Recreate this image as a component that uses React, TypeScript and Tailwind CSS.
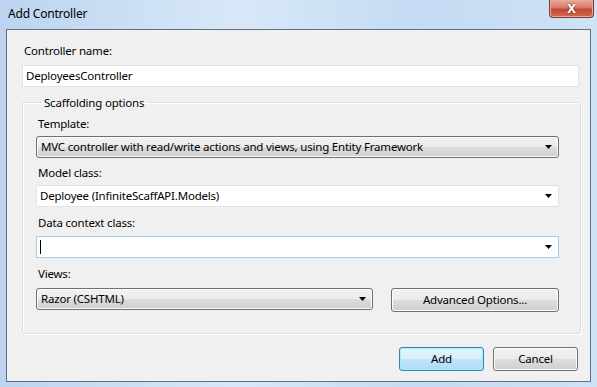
const font = { fontFamily: '"Noto Sans", "Open Sans", sans-serif' };

function Arrow() {
  return (
    <svg width="7" height="4" viewBox="0 0 7 4" className="shrink-0">
      <path d="M0 0h7L3.5 4z" fill="#000" />
    </svg>
  );
}

function Label({ children }: { children: React.ReactNode }) {
  return <div className="h-[17px] text-[11.5px] leading-[17px] tracking-[-0.2px] text-black">{children}</div>;
}

function DropButton({ text, className }: { text: string; className: string }) {
  return (
    <div
      className={`flex h-[22px] items-center justify-between rounded-[3px] border border-[#707070] bg-[linear-gradient(#f2f2f2,#ebebeb_50%,#dddddd_50%,#cfcfcf)] pl-[4px] pr-[6px] text-[11.5px] tracking-[-0.2px] text-black shadow-[inset_0_0_0_1px_#fcfcfc] ${className}`}
    >
      <span>{text}</span>
      <Arrow />
    </div>
  );
}

function Combo({ text, focused }: { text?: string; focused?: boolean }) {
  return (
    <div
      className={`flex h-[22px] w-[523px] items-center justify-between border bg-white pl-[3px] pr-[6px] text-[11.5px] tracking-[-0.2px] text-black ${
        focused ? 'border-[#a9cde6]' : 'border-[#e2e3ea]'
      }`}
    >
      {text ? <span>{text}</span> : <span className="h-[14px] w-px bg-black" />}
      <Arrow />
    </div>
  );
}

function Button({ text, primary, className }: { text: string; primary?: boolean; className: string }) {
  return (
    <div
      className={`flex items-center justify-center rounded-[3px] border text-[11.5px] tracking-[-0.2px] text-black ${
        primary
          ? 'border-[#3c7fb1] bg-[linear-gradient(#e5f4fc,#d6eefc_50%,#bfe4fb_50%,#aedcf6)] shadow-[inset_0_0_0_1px_#9ff0fd]'
          : 'border-[#707070] bg-[linear-gradient(#f2f2f2,#ebebeb_50%,#dddddd_50%,#cfcfcf)] shadow-[inset_0_0_0_1px_#fcfcfc]'
      } ${className}`}
    >
      {text}
    </div>
  );
}

export default function App() {
  return (
    <div
      style={font}
      className="flex h-[387px] w-[597px] flex-col bg-[linear-gradient(90deg,#bcd4ef,#d8e8f8_40%,#c4dbf3_70%,#cfe2f6)]"
    >
      {/* title bar */}
      <div className="flex h-[29px] items-start justify-between">
        <div className="pl-[8px] pt-[5px] text-[12px] tracking-[-0.2px] text-black">Add Controller</div>
        <div className="mr-[3px] flex h-[18px] w-[45px] items-center justify-center rounded-b-[4px] border border-t-0 border-[#7a3a2e] bg-[linear-gradient(#e9a999,#d77a66_45%,#c44731_55%,#d06a52)] shadow-[inset_0_0_0_1px_#eba899]">
          <span className="text-[13px] font-bold leading-none text-white [text-shadow:0_0_2px_#5a1a10]">X</span>
        </div>
      </div>

      {/* client area */}
      <div className="mx-[6px] flex h-[353px] flex-col border border-[#5e7189] bg-[#f0f0f0] px-[15px]">
        <div className="pl-[2px] pt-[12px]">
          <Label>Controller name:</Label>
        </div>
        <div className="mt-[6px] flex h-[22px] w-[557px] items-center border border-[#e2e3ea] bg-white pl-[3px] text-[11.5px] tracking-[-0.2px] text-black">
          DeployeesController
        </div>

        <fieldset className="mt-[8px] h-[239px] w-[559px] rounded-[3px] border border-[#d5dfe5] px-[13px] shadow-[inset_1px_1px_0_#fff,1px_1px_0_#fff]">
          <legend className="ml-[5px] px-[3px] text-[11.5px] leading-[15px] tracking-[-0.2px] text-black">Scaffolding options</legend>
          <div className="pl-[2px] pt-[5px]">
            <Label>Template:</Label>
          </div>
          <DropButton
            text="MVC controller with read/write actions and views, using Entity Framework"
            className="mt-[4px] w-[523px]"
          />
          <div className="pl-[2px] pt-[6px]">
            <Label>Model class:</Label>
          </div>
          <div className="mt-[4px]">
            <Combo text="Deployee (InfiniteScaffAPI.Models)" />
          </div>
          <div className="pl-[2px] pt-[7px]">
            <Label>Data context class:</Label>
          </div>
          <div className="mt-[5px]">
            <Combo focused />
          </div>
          <div className="pl-[2px] pt-[7px]">
            <Label>Views:</Label>
          </div>
          <div className="mt-[6px] flex items-start">
            <DropButton text="Razor (CSHTML)" className="w-[337px]" />
            <Button text="Advanced Options..." className="ml-[18px] h-[24px] w-[168px]" />
          </div>
        </fieldset>

        <div className="-mr-[3px] mt-[13px] flex justify-end">
          <Button text="Add" primary className="h-[24px] w-[85px]" />
          <Button text="Cancel" className="ml-[9px] h-[24px] w-[85px]" />
        </div>
      </div>
    </div>
  );
}
